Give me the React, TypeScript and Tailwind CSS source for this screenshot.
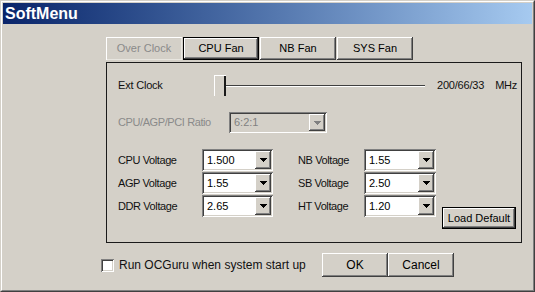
import React from 'react'

const font = { fontFamily: '"Liberation Sans", Arial, sans-serif' }

const raised =
  'shadow-[inset_-1px_-1px_#404040,inset_1px_1px_#ffffff,inset_-2px_-2px_#808080,inset_2px_2px_#d4d0c8]'
const sunken =
  'shadow-[inset_1px_1px_#808080,inset_-1px_-1px_#ffffff,inset_2px_2px_#404040,inset_-2px_-2px_#d4d0c8]'

function Arrow({ color = '#000' }: { color?: string }) {
  return (
    <svg width="7" height="4" viewBox="0 0 7 4">
      <rect x="0" y="0" width="7" height="1" fill={color} />
      <rect x="1" y="1" width="5" height="1" fill={color} />
      <rect x="2" y="2" width="3" height="1" fill={color} />
      <rect x="3" y="3" width="1" height="1" fill={color} />
    </svg>
  )
}

function Combo({ value, className, disabled }: { value: string; className: string; disabled?: boolean }) {
  return (
    <div className={`flex p-[2px] ${sunken} ${disabled ? 'bg-[#d4d0c8]' : 'bg-white'} ${className}`}>
      <div className={`flex flex-1 items-center pl-[3px] text-[11px] ${disabled ? 'text-[#808080]' : 'text-black'}`}>
        {value}
      </div>
      <div className={`flex w-[16px] items-center justify-center bg-[#d4d0c8] ${raised}`}>
        <Arrow color={disabled ? '#808080' : '#000'} />
      </div>
    </div>
  )
}

function Tab({ label, active, disabled }: { label: string; active?: boolean; disabled?: boolean }) {
  if (active) {
    return (
      <div className="flex h-[23px] w-[76px] border border-black">
        <div className={`flex flex-1 items-center justify-center text-[11px] text-black ${raised}`}>{label}</div>
      </div>
    )
  }
  return (
    <div
      className={`flex h-[23px] w-[76px] items-center justify-center text-[11px] ${
        disabled ? 'text-[#8a8a8a] shadow-[inset_1px_1px_#ffffff,inset_-1px_-1px_#e8e6e0]' : `text-black ${raised}`
      }`}
    >
      {label}
    </div>
  )
}

const volts = [
  ['CPU Voltage', '1.500', 'NB Voltage', '1.55'],
  ['AGP Voltage', '1.55', 'SB Voltage', '2.50'],
  ['DDR Voltage', '2.65', 'HT Voltage', '1.20'],
]

export default function App() {
  return (
    <div style={font} className="h-[292px] w-[535px] border border-b-[#404040] border-l-[#d4d0c8] border-r-[#404040] border-t-[#d4d0c8] bg-[#d4d0c8] text-[#111]">
      <div className="flex h-full flex-col border border-b-[#808080] border-l-white border-r-[#808080] border-t-white p-px">
        <div className="flex h-[21px] items-center bg-gradient-to-r from-[#0a246a] to-[#a6caf0] pl-[2px] text-[16px] font-bold text-white">
          SoftMenu
        </div>

        <div className="ml-[103px] mt-[13px] flex gap-px">
          <Tab label="Over Clock" disabled />
          <Tab label="CPU Fan" active />
          <Tab label="NB Fan" />
          <Tab label="SYS Fan" />
        </div>

        <div className="ml-[103px] mt-[2px] h-[181px] w-[416px] border border-[#1a1a1a] pl-[11px]">
          <div className="mt-[12px] flex h-[21px] items-start text-[11px] tracking-[-0.2px]">
            <div className="flex h-[21px] w-[96px] items-center">Ext Clock</div>
            <div className="h-[21px] w-[12px] border-l border-t border-l-white border-t-white shadow-[inset_-2px_0_#1a1a1a]" />
            <div className="mt-[10px] h-[2px] w-[199px] border-b border-t border-b-white border-t-[#404040]" />
            <div className="ml-[12px] flex h-[21px] items-center">200/66/33</div>
            <div className="ml-[11px] flex h-[21px] items-center">MHz</div>
          </div>

          <div className="mt-[16px] flex h-[21px] items-center">
            <div className="w-[111px] text-[11px] tracking-[-0.4px] text-[#8a8a8a]">CPU/AGP/PCI Ratio</div>
            <Combo value="6:2:1" disabled className="h-[21px] w-[98px]" />
          </div>

          <div className="mt-[16px] flex items-start">
            <div className="flex flex-col gap-px">
              {volts.map(([l1, v1, l2, v2]) => (
                <div key={l1} className="flex h-[22px] items-center text-[11px] tracking-[-0.4px]">
                  <div className="w-[84px]">{l1}</div>
                  <Combo value={v1} className="h-[22px] w-[71px] tracking-normal" />
                  <div className="ml-[25px] w-[66px]">{l2}</div>
                  <Combo value={v2} className="h-[22px] w-[72px] tracking-normal" />
                </div>
              ))}
            </div>
            <div className="ml-[6px] mt-[58px] flex h-[22px] w-[74px] border border-black">
              <div className={`flex flex-1 items-center justify-center text-[11px] text-black ${raised}`}>Load Default</div>
            </div>
          </div>
        </div>

        <div className="ml-[98px] mt-[10px] flex h-[24px] items-center text-[12px]">
          <div className="flex w-[221px] items-center">
            <div className={`h-[13px] w-[13px] bg-white ${sunken}`} />
            <span className="ml-[5px] text-[#111]">Run OCGuru when system start up</span>
          </div>
          <div className={`flex h-[24px] w-[66px] items-center justify-center text-black ${raised}`}>OK</div>
          <div className={`flex h-[24px] w-[66px] items-center justify-center text-black ${raised}`}>Cancel</div>
        </div>
      </div>
    </div>
  )
}
